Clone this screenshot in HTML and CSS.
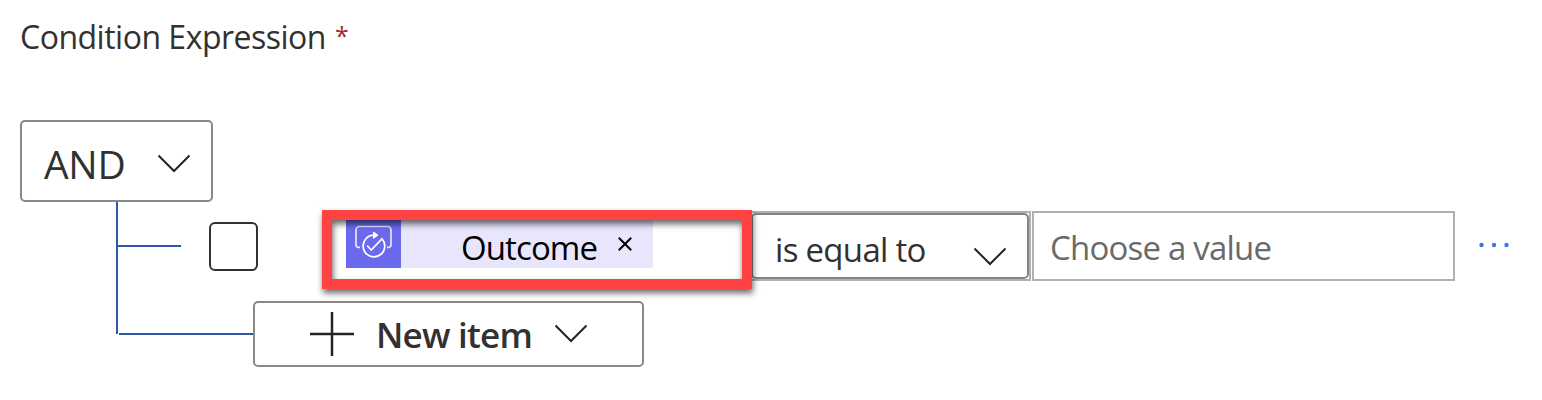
FILE: index.html
```html
<!DOCTYPE html>
<html lang="en">
<head>
<meta charset="utf-8">
<title>Condition Expression</title>
<link rel="stylesheet" href="styles.css">
</head>
<body>
<main class="editor">
  <div class="label"><span class="label-text">Condition Expression</span><span class="required">*</span></div>
  <div class="group">
    <span class="group-text">AND</span>
    <svg class="group-chevron" width="34" height="20" viewBox="0 0 34 20"><path d="M1.5 1.5 17 17 32.500 1.500"/></svg>
  </div>
  <div class="tree">
    <div class="condition">
      <div class="branch"></div>
      <div class="checkbox"></div>
      <div class="operand">
        <div class="token">
          <svg class="token-icon" width="55" height="48" viewBox="0 0 55 48">
            <path d="M14 27.300H12.500a2.500 2.500 0 0 1-2.500-2.500V10a3.500 3.500 0 0 1 3.500-3.500h28A3.500 3.500 0 0 1 45 10v14.800a2.500 2.500 0 0 1-2.500 2.500H41"/>
            <path class="ring" d="M28.500 15.200A10.800 10.800 0 1 0 36 18.800L25.200 30 21.200 25.500"/>
            <path class="arrow" d="M27.500 12 32 15.200 27.500 18.400z"/>
          </svg>
          <span class="token-text">Outcome</span>
          <svg class="token-close" width="14" height="14" viewBox="0 0 14 14"><path d="M.8.8 13.200 13.200M13.200.8.8 13.200"/></svg>
        </div>
      </div>
      <div class="operator">
        <div class="select">
          <span class="select-text">is equal to</span>
          <svg class="select-chevron" width="34" height="20" viewBox="0 0 34 20"><path d="M1.500 1.500 17 17 32.500 1.500"/></svg>
        </div>
      </div>
      <div class="value"><span class="value-text">Choose a value</span></div>
      <svg class="more" width="30" height="6" viewBox="0 0 30 6"><circle cx="2.500" cy="3" r="2.200"/><circle cx="15" cy="3" r="2.200"/><circle cx="27.500" cy="3" r="2.200"/></svg>
    </div>
    <div class="add-row">
      <div class="add-line"></div>
      <div class="add">
        <svg class="plus" width="44" height="44" viewBox="0 0 44 44"><path d="M22 0V44M0 22H44"/></svg>
        <span class="add-text">New item</span>
        <svg class="add-chevron" width="34" height="20" viewBox="0 0 34 20"><path d="M1.500 1.500 17 17 32.500 1.500"/></svg>
      </div>
    </div>
  </div>
</main>
</body>
</html>
```
FILE: styles.css
```css
* { box-sizing: border-box; }
body {
  margin: 0;
  background: #fff;
  color: #323130;
  font-family: "Open Sans", "Noto Sans", sans-serif;
  overflow: hidden;
}
svg { display: block; flex: none; fill: none; stroke: #252423; stroke-width: 2; }
span { white-space: nowrap; flex: none; }
.editor { width: 1542px; height: 400px; padding-left: 20px; }
.label { display: flex; height: 120px; padding-top: 14px; font-size: 32px; line-height: 46px; }
.label-text { width: 315px; letter-spacing: -.5px; }
.required { color: #a4262c; font-size: 25px; line-height: 42px; }
.group {
  display: flex; width: 193px; height: 82px; padding-left: 22px;
  border: 2px solid #8a8886; border-radius: 5px;
}
.group-text { width: 113px; padding-top: 15px; font-size: 39px; line-height: 54px; letter-spacing: -.3px; }
.group-chevron { margin-top: 32px; }
.tree { width: 1400px; height: 132px; margin-left: 96px; padding-top: 8px; border-left: 2px solid #3058a8; }
.condition { display: flex; height: 80px; }
.branch { flex: none; width: 63px; height: 2px; margin-top: 35px; background: #3058a8; }
.checkbox { flex: none; width: 49px; height: 49px; margin: 12px 64px 0 28px; border: 2px solid #323130; border-radius: 6px; }
.operand { position: relative; z-index: 1; flex: none; width: 430px; height: 80px; padding: 10px 0 0 24px; }
.operand::after {
  content: ""; position: absolute; inset: 0 0 1px; border: 10px solid #ff4343;
  filter: drop-shadow(1px 4px 3px rgba(0, 0, 0, .6));
}
.token { display: flex; width: 307px; height: 48px; background: #e8e6fc; }
.token-icon { background: #6b69ee; stroke: #e8e6fc; stroke-width: 1.7; }
.token-icon .ring { stroke: #fff; }
.token-icon .arrow { fill: #fff; stroke: #fff; stroke-width: 1; }
.token-text { width: 155px; padding: 5px 0 0 60px; margin-right: 62px; color: #000; font-size: 33px; line-height: 46px; letter-spacing: -.9px; }
.token-close { margin-top: 17px; stroke: #000; }
.operator { flex: none; width: 281px; height: 70px; margin: 1px 0 0 -2px; border: 2px solid #b0b0b0; }
.select { display: flex; width: 278px; height: 66px; margin-left: -1px; padding-left: 22px; border: 2px solid #858585; border-radius: 5px; }
.select-text { width: 198px; padding-top: 12px; font-size: 33px; line-height: 46px; letter-spacing: -.7px; }
.select-chevron { margin-top: 32px; }
.value { flex: none; width: 423px; height: 70px; margin: 1px 0 0 1px; padding: 12px 0 0 16px; border: 2px solid #b0b0b0; color: #6a6a6a; font-size: 33px; line-height: 46px; letter-spacing: -.8px; }
.more { margin: 32px 0 0 24px; fill: #3b79d8; stroke: none; }
.add-row { display: flex; align-items: center; height: 66px; margin-top: 11px; }
.add-line { width: 134px; height: 2px; margin-left: 1px; background: #3058a8; }
.add { display: flex; width: 391px; height: 66px; padding-left: 55px; border: 2px solid #8a8886; border-radius: 5px; background: #fff; }
.plus { margin-top: 9px; stroke-width: 2.500; }
.add-text { width: 200px; padding: 8px 0 0 22px; font-size: 35px; font-weight: 600; line-height: 48px; letter-spacing: -.8px; }
.add-chevron { margin-top: 21px; }
```
